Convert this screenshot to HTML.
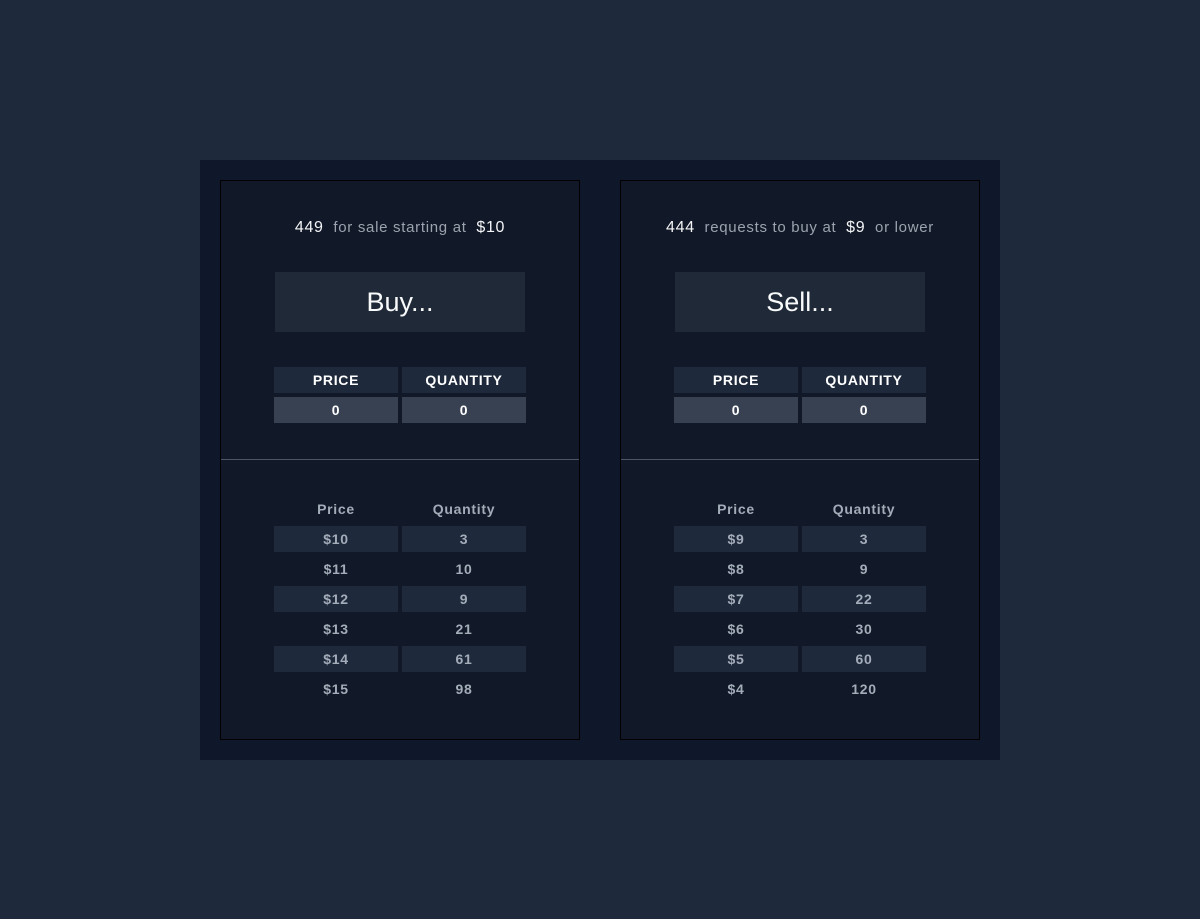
<!DOCTYPE html>
<html><head><meta charset="utf-8"><style>
*{margin:0;padding:0;box-sizing:border-box}
html,body{width:1200px;height:919px;background:#1e293b;overflow:hidden;font-family:"Liberation Sans",sans-serif}
.outer{position:absolute;left:200px;top:160px;width:800px;height:600px;background:#0f172a}
.panel{position:absolute;top:20px;width:360px;height:560px;background:#111827;border:1px solid #000}
.p1{left:20px}.p2{left:420px}
.head{position:absolute;top:38px;left:0;width:358px;text-align:center;font-size:15px;color:#9ca3af;letter-spacing:.7px}
.head b{font-weight:normal;color:#f3f4f6;font-size:16px}
.btn{position:absolute;left:54px;top:91px;width:250px;height:60px;background:#1f2937;color:#f9fafb;font-size:27px;text-align:center;line-height:60px}
.c{position:absolute;width:124px;height:26px;line-height:26px;text-align:center;font-size:14px;font-weight:bold;letter-spacing:.7px}
.h{background:#1e293b;color:#fff}
.v{background:#374151;color:#fff}
.div{position:absolute;left:0;top:278px;width:358px;height:1px;background:#4b5563}
.l{color:#a3acb9;background:none}
.s{background:#1e293b}
</style></head><body>
<div class="outer">
<div class="panel p1">
<div class="head"><b>449</b>&nbsp; for sale starting at&nbsp; <b>$10</b></div>
<div class="btn">Buy...</div>
<div class="c h" style="left:53px;top:186px">PRICE</div><div class="c h" style="left:181px;top:186px">QUANTITY</div>
<div class="c v" style="left:53px;top:216px">0</div><div class="c v" style="left:181px;top:216px">0</div>
<div class="div"></div>
<div class="c l" style="left:53px;top:315px">Price</div><div class="c l" style="left:181px;top:315px">Quantity</div>
<div class="c l s" style="left:53px;top:345px">$10</div><div class="c l s" style="left:181px;top:345px">3</div>
<div class="c l" style="left:53px;top:375px">$11</div><div class="c l" style="left:181px;top:375px">10</div>
<div class="c l s" style="left:53px;top:405px">$12</div><div class="c l s" style="left:181px;top:405px">9</div>
<div class="c l" style="left:53px;top:435px">$13</div><div class="c l" style="left:181px;top:435px">21</div>
<div class="c l s" style="left:53px;top:465px">$14</div><div class="c l s" style="left:181px;top:465px">61</div>
<div class="c l" style="left:53px;top:495px">$15</div><div class="c l" style="left:181px;top:495px">98</div>
</div>
<div class="panel p2">
<div class="head"><b>444</b>&nbsp; requests to buy at&nbsp; <b>$9</b>&nbsp; or lower</div>
<div class="btn">Sell...</div>
<div class="c h" style="left:53px;top:186px">PRICE</div><div class="c h" style="left:181px;top:186px">QUANTITY</div>
<div class="c v" style="left:53px;top:216px">0</div><div class="c v" style="left:181px;top:216px">0</div>
<div class="div"></div>
<div class="c l" style="left:53px;top:315px">Price</div><div class="c l" style="left:181px;top:315px">Quantity</div>
<div class="c l s" style="left:53px;top:345px">$9</div><div class="c l s" style="left:181px;top:345px">3</div>
<div class="c l" style="left:53px;top:375px">$8</div><div class="c l" style="left:181px;top:375px">9</div>
<div class="c l s" style="left:53px;top:405px">$7</div><div class="c l s" style="left:181px;top:405px">22</div>
<div class="c l" style="left:53px;top:435px">$6</div><div class="c l" style="left:181px;top:435px">30</div>
<div class="c l s" style="left:53px;top:465px">$5</div><div class="c l s" style="left:181px;top:465px">60</div>
<div class="c l" style="left:53px;top:495px">$4</div><div class="c l" style="left:181px;top:495px">120</div>
</div>
</div>
</body></html>
